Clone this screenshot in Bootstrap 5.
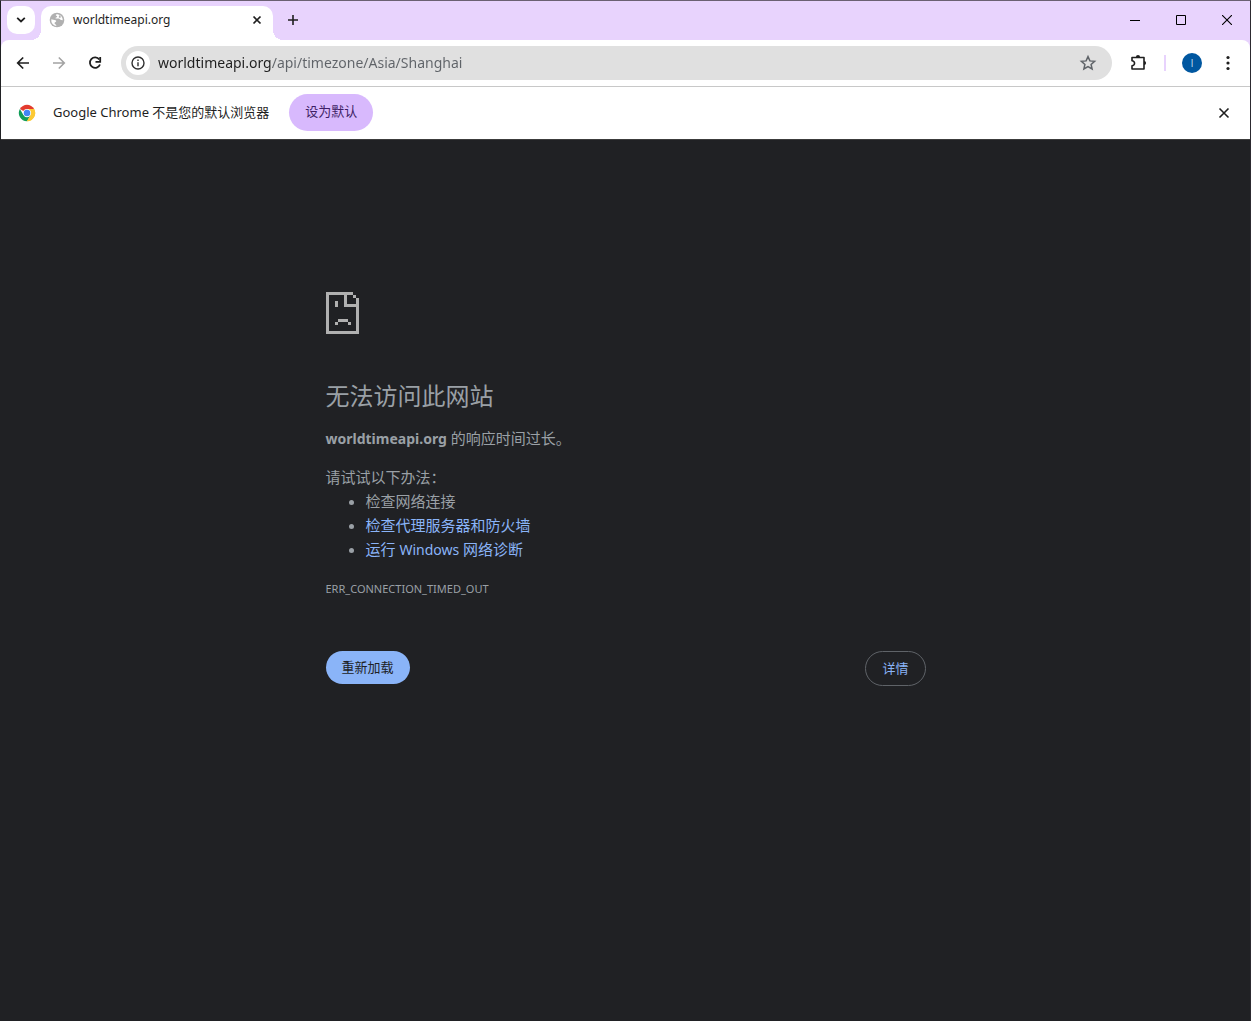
<!DOCTYPE html>
<html lang="zh-CN">
<head>
<meta charset="utf-8">
<meta name="viewport" content="width=device-width, initial-scale=1">
<title>worldtimeapi.org</title>
<link rel="stylesheet" href="https://cdn.jsdelivr.net/npm/bootstrap@5.3.0/dist/css/bootstrap.min.css">
<style>
body{font-family:"Noto Sans","Noto Sans CJK SC",sans-serif;font-size:13px;background:#202124;color:#1f1f1f}
button{color:inherit}
svg{display:block;flex:none}
.browser{border:1px solid #6b6072;border-color:#6b6072 #2c2a30 #202124 #202124;border-bottom:0}
.icon-btn{border:0;background:none;padding:0;display:flex;align-items:center;justify-content:center;flex:none}
.tabstrip{height:39px;background:#e8d3fd}
.tab-search{width:28px;height:28px;border-radius:10px;background:#fff;margin:5px 6px 0}
.page-tab{position:relative;width:232px;height:34px;background:#fff;border-radius:10px 10px 0 0;padding:0 8px 6px;margin-top:5px;font-size:12px}
.page-tab::before,.page-tab::after{content:"";position:absolute;bottom:0;width:10px;height:10px}
.page-tab::before{left:-10px;background:radial-gradient(circle at 0 0,transparent 10px,#fff 10px)}
.page-tab::after{right:-10px;background:radial-gradient(circle at 100% 0,transparent 10px,#fff 10px)}
.new-tab{width:28px;height:28px;margin:5px 0 0 6px}
.win-btn{width:46px;height:38px}
.toolbar-wrap{background:#e8d3fd}
.toolbar-row{height:47px;background:#fff;border-radius:8px 8px 0 0;border-bottom:1px solid #c8c8c8;padding:0 12px 0 4px}
.nav-btn{width:36px;height:34px}
.omnibox{height:34px;background:#e0e0e0;border-radius:17px;padding:0 12px 0 5px;margin-left:8px}
.site-info{width:24px;height:24px;border-radius:12px;background:#fff}
.url-input{border:0;outline:0;padding:0 0 2px;font-size:14px;color:#5f6368;background:linear-gradient(90deg,#1f1f1f 114px,#5f6368 114px);-webkit-background-clip:text;background-clip:text;-webkit-text-fill-color:transparent}
.divider{width:2px;height:16px;background:#e8d3fd}
.avatar-btn{width:20px;height:20px;border-radius:10px;background:#0057a0;color:#b9d3ea;font-family:"Open Sans",sans-serif;font-size:11px}
.infobar{height:53px;background:#fff;border-bottom:1px solid #3c3c3c;padding:0 14px 0 17px}
.infobar-text{margin:0 20px 0 17px}
.pill{border:0;border-radius:20px;padding:0 16px 2px;line-height:20px}
.default-btn{height:37px;margin-bottom:2px;background:#d8b9fd;color:#3f1f66}
.error-page{max-width:600px;padding-top:152px;color:#9aa0a6;font-size:15px;line-height:24px}
.error-page .latin{font-size:14px}
.error-page h1{font-size:24px;line-height:28px;font-weight:400;margin:48px 0 16px}
.error-page p{margin:0}
.error-page p+p{margin-top:14px}
.error-page ul{margin:0;padding-left:40px}
.error-page a{color:#8ab4f8;text-decoration:none}
.error-code{font-size:11px;margin-top:15px}
.actions{margin-top:50px;font-size:13px}
.reload-btn{height:33px;background:#8ab4f8;color:#202124}
.details-btn{height:35px;background:none;border:1px solid #5f6368;color:#8ab4f8}
</style>
<script src="https://cdn.jsdelivr.net/npm/bootstrap@5.3.0/dist/js/bootstrap.bundle.min.js"></script>
</head>
<body>
<div class="browser min-vh-100">
  <header>
    <div class="tabstrip d-flex">
      <button class="icon-btn tab-search" aria-label="搜索标签页"><svg width="10" height="6" viewBox="0 0 10 6" fill="none" stroke="#1f1f1f" stroke-width="1.800"><path d="M1.200 .8 5 4.400 8.800 .8"/></svg></button>
      <div class="page-tab d-flex align-items-center">
        <svg width="16" height="16" viewBox="0 0 16 16"><circle cx="8" cy="8" r="7.3" fill="#b0b0b0"/><path d="M8.6 2.2c-2.4 0-2.1 1.2-.8 1.7.8.3.4 1.4-.7 1.5-.9.1-.7 1.2.2 1.2h2.4c1.3 0 1.3 1.4 2.5 1.5l1.6.2A6 6 0 0 0 8.600 2.200M2.300 7.200c1.200.1 2.900.6 4.200 1.100 1.400.6.7 1.700-.3 1.900-.9.2-.7 1.800.1 2.100.7.3 1 .8 1 1.700A6 6 0 0 1 2.300 7.200" fill="#fff"/><path d="m10 3 1.800 1.500-.4 1.400-1.600-.5Z" fill="#b0b0b0"/></svg>
        <span class="ms-2 flex-grow-1">worldtimeapi.org</span>
        <button class="icon-btn" aria-label="关闭标签页"><svg width="16" height="16" viewBox="0 0 16 16" stroke="#1f1f1f" stroke-width="1.700"><path d="m4.500 4.500 7 7m0-7-7 7"/></svg></button>
      </div>
      <button class="icon-btn new-tab" aria-label="新标签页"><svg width="12" height="12" viewBox="0 0 12 12" stroke="#1f1f1f" stroke-width="1.600"><path d="M6 1v10M1 6h10"/></svg></button>
      <div class="d-flex ms-auto">
        <button class="icon-btn win-btn" aria-label="最小化"><svg width="10" height="10" viewBox="0 0 10 10" stroke="#000"><path d="M0 5.500h10"/></svg></button>
        <button class="icon-btn win-btn" aria-label="最大化"><svg width="10" height="10" viewBox="0 0 10 10" stroke="#000" fill="none"><path d="M.5.5h9v9h-9Z"/></svg></button>
        <button class="icon-btn win-btn" aria-label="关闭"><svg width="10" height="10" viewBox="0 0 10 10" stroke="#000" stroke-width="1.100"><path d="m0 0 10 10M10 0 0 10"/></svg></button>
      </div>
    </div>
    <div class="toolbar-wrap">
      <div class="toolbar-row d-flex align-items-center">
        <button class="icon-btn nav-btn" aria-label="后退"><svg width="16" height="16" viewBox="0 0 16 16" fill="none" stroke="#1f1f1f" stroke-width="1.700"><path d="M14 8H3M8.200 2.500 2.700 8l5.500 5.500"/></svg></button>
        <button class="icon-btn nav-btn" aria-label="前进"><svg width="16" height="16" viewBox="0 0 16 16" fill="none" stroke="#a3a3a3" stroke-width="1.600"><path d="M2 8h11M7.800 2.500 13.300 8l-5.500 5.500"/></svg></button>
        <button class="icon-btn nav-btn" aria-label="重新加载此页"><svg width="16" height="16" viewBox="0 0 16 16" fill="none" stroke="#1f1f1f" stroke-width="1.800"><path d="M12.300 4.500A5.200 5.200 0 1 0 13 9.500"/><path d="M13.200 2v4.800H8.500"/></svg></button>
        <div class="omnibox d-flex align-items-center flex-grow-1">
          <button class="icon-btn site-info" aria-label="查看网站信息"><svg width="14" height="14" viewBox="0 0 14 14" fill="none" stroke="#303030" stroke-width="1.400"><circle cx="7" cy="7" r="6"/><path d="M7 6.200v4M7 3.600v1.500"/></svg></button>
          <input class="url-input flex-grow-1 ms-2" type="text" aria-label="地址和搜索栏" value="worldtimeapi.org/api/timezone/Asia/Shanghai">
          <button class="icon-btn" aria-label="为此标签页添加书签"><svg width="24" height="20" viewBox="0 0 24 20" fill="none" stroke="#5f6368" stroke-width="1.500"><path d="m12 3.600 1.900 4.300 4.700.4-3.500 3.100 1 4.600-4.100-2.400L7.900 16l1-4.600-3.500-3.100 4.700-.4Z"/></svg></button>
        </div>
        <button class="icon-btn ms-3" aria-label="扩展程序"><svg width="20" height="20" viewBox="0 0 20 20"><path d="M4 4.500h12v11.500h-12v-3.200a2.500 2.500 0 0 0 0-5.100Z" fill="none" stroke="#1f1f1f" stroke-width="1.600" stroke-linejoin="round"/><path d="M7.900 4.200a2.100 2.100 0 0 1 4.200 0ZM16 7.900a2.100 2.100 0 0 1 0 4.200Z" fill="#1f1f1f"/></svg></button>
        <span class="divider ms-3"></span>
        <button class="icon-btn avatar-btn ms-3" aria-label="个人资料">I</button>
        <button class="icon-btn ms-3" aria-label="自定义及控制"><svg width="20" height="20" viewBox="0 0 20 20" fill="#1f1f1f"><circle cx="10" cy="4.500" r="1.600"/><circle cx="10" cy="10" r="1.600"/><circle cx="10" cy="15.500" r="1.600"/></svg></button>
      </div>
    </div>
    <div class="infobar d-flex align-items-center">
      <svg width="18" height="18" viewBox="0 0 48 48"><path d="M24 24 5 13a22 22 0 0 1 38 0Z" fill="#e33b2e"/><path d="M24 24 24 46A22 22 0 0 1 5 13l9.500 16.500Z" fill="#109d58"/><path d="M24 13h19a22 22 0 0 1-19 33l9.500-16.500Z" fill="#fcc934"/><path d="M5 13 14.500 29.500 24 24l9.500 5.500L24 46 24 35 14.500 29.500Z" fill="#109d58"/><path d="M33.500 29.500 24 46A22 22 0 0 0 43 13H24Z" fill="#fcc934"/><circle cx="24" cy="24" r="11" fill="#fff"/><circle cx="24" cy="24" r="8.700" fill="#4285f4"/></svg>
      <span class="infobar-text">Google Chrome 不是您的默认浏览器</span>
      <button class="pill default-btn">设为默认</button>
      <button class="icon-btn ms-auto" aria-label="关闭"><svg width="24" height="24" viewBox="0 0 24 24" stroke="#1f1f1f" stroke-width="1.600"><path d="m7.500 7.500 9 9m0-9-9 9"/></svg></button>
    </div>
  </header>
  <main class="error-page mx-auto">
    <svg width="34" height="42" viewBox="0 0 34 42" fill="#b0b0b0" shape-rendering="crispEdges"><path d="M0 0h27v3H21v9h9V6h3v36H0ZM3 3v36h27V15H18V3ZM27 3h3v3h-3ZM9 9h3v6H9ZM12 27h10v3H12ZM9 30h3v3H9ZM22 30h3v3h-3Z" fill-rule="evenodd"/></svg>
    <h1>无法访问此网站</h1>
    <p><strong class="latin">worldtimeapi.org</strong> 的响应时间过长。</p>
    <p>请试试以下办法：</p>
    <ul>
      <li>检查网络连接</li>
      <li><a href="#">检查代理服务器和防火墙</a></li>
      <li><a href="#">运行 <span class="latin">Windows</span> 网络诊断</a></li>
    </ul>
    <div class="error-code">ERR_CONNECTION_TIMED_OUT</div>
    <div class="actions d-flex justify-content-between align-items-start">
      <button class="pill reload-btn">重新加载</button>
      <button class="pill details-btn">详情</button>
    </div>
  </main>
</div>
</body>
</html>
